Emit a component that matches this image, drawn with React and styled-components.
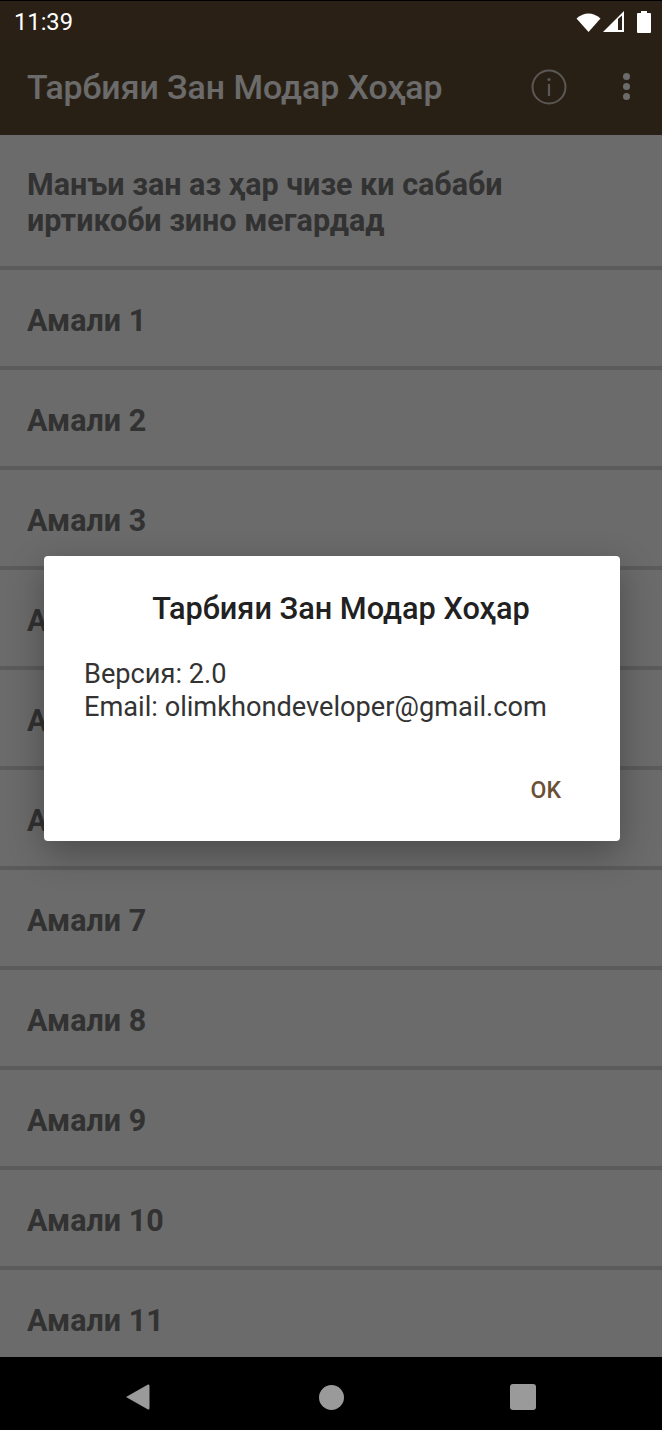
import styled, { createGlobalStyle } from 'styled-components'

const rows = ['Амали 1', 'Амали 2', 'Амали 3', 'Амали 4', 'Амали 5', 'Амали 6', 'Амали 7', 'Амали 8', 'Амали 9', 'Амали 10', 'Амали 11']

export default function App() {
  return (
    <Screen>
      <GlobalStyle />
      <StatusBar>
        <Clock>11:39</Clock>
        <StatusIcons>
          <svg width='25' height='20' viewBox='0 0 25 20'>
            <path d='M0.5 6.5 Q12.5 -3.5 24.5 6.5 L12.5 20 Z' fill='#fff' />
          </svg>
          <SignalIcon width='22' height='21' viewBox='0 0 22 21'>
            <path d='M21 0 V21 H0 Z' fill='#fff' />
            <path d='M15 8 L19 4.5 V19 H15 Z' fill='#2a2015' />
          </SignalIcon>
          <svg width='14' height='22' viewBox='0 0 14 22'>
            <path d='M4 0 H10 V2 H13 Q14 2 14 3 V21 Q14 22 13 22 H1 Q0 22 0 21 V3 Q0 2 1 2 H4 Z' fill='#fff' />
          </svg>
        </StatusIcons>
      </StatusBar>
      <Body>
        <AppBar>
          <AppTitle>Тарбияи Зан Модар Хоҳар</AppTitle>
          <InfoIcon width='36' height='36' viewBox='0 0 36 36'>
            <circle cx='18' cy='18' r='16.5' fill='none' stroke='#fff' strokeOpacity='0.75' strokeWidth='2' />
            <circle cx='18' cy='10.5' r='1.6' fill='#fff' fillOpacity='0.75' />
            <path d='M18 15 V27' stroke='#fff' strokeOpacity='0.75' strokeWidth='2.2' fill='none' />
          </InfoIcon>
          <MenuDots>
            <i />
            <i />
            <i />
          </MenuDots>
        </AppBar>
        <List>
          <Row $first>Манъи зан аз ҳар чизе ки сабаби иртикоби зино мегардад</Row>
          {rows.map(r => (
            <Row key={r}>{r}</Row>
          ))}
        </List>
        <Scrim>
          <Dialog>
            <DialogTitle>Тарбияи Зан Модар Хоҳар</DialogTitle>
            <DialogText>
              Версия: 2.0
              <br />
              Email: olimkhondeveloper@gmail.com
            </DialogText>
            <DialogActions>
              <OkButton>OK</OkButton>
            </DialogActions>
          </Dialog>
        </Scrim>
      </Body>
      <NavBar>
        <BackIcon width='26' height='28' viewBox='0 0 26 28'>
          <path d='M1 14 L23 1.5 Q24.5 1 24.5 3 V25 Q24.5 27 23 26.5 Z' fill='#9a9a9a' />
        </BackIcon>
        <HomeDot />
        <RecentSquare />
      </NavBar>
    </Screen>
  )
}

const GlobalStyle = createGlobalStyle`
  html, body {
    margin: 0;
    padding: 0;
    background: #000;
  }
  * {
    box-sizing: border-box;
  }
`

const Screen = styled.div`
  width: 662px;
  height: 1430px;
  display: flex;
  flex-direction: column;
  overflow: hidden;
  font-family: Roboto, 'Noto Sans', sans-serif;
`

const StatusBar = styled.div`
  height: 40px;
  flex: none;
  display: flex;
  align-items: center;
  justify-content: space-between;
  padding: 2px 11px 0 14px;
  background: #2a2015;
  border-top: 1px solid #000;
`

const Clock = styled.span`
  color: #fff;
  font-size: 23.7px;
`

const StatusIcons = styled.div`
  display: flex;
  align-items: center;
  gap: 2px;
`

const SignalIcon = styled.svg`
  margin-right: 10px;
`

const Body = styled.div`
  position: relative;
  flex: 1;
  min-height: 0;
  display: flex;
  flex-direction: column;
  overflow: hidden;
`

const AppBar = styled.div`
  height: 95px;
  flex: none;
  display: flex;
  align-items: center;
  padding: 0 32px 0 27px;
  background: #624c32;
`

const AppTitle = styled.div`
  flex: 1;
  color: #fff;
  font-size: 33.8px;
  font-weight: 500;
  line-height: 1;
`

const InfoIcon = styled.svg`
  margin-right: 56px;
  margin-top: -2px;
`

const MenuDots = styled.div`
  display: flex;
  flex-direction: column;
  gap: 3px;
  margin-top: -2px;
  i {
    display: block;
    width: 7px;
    height: 7px;
    border-radius: 50%;
    background: #fff;
  }
`

const List = styled.div`
  flex: 1;
  background: #fff;
`

const Row = styled.div`
  height: ${props => (props.$first ? 135 : 100)}px;
  display: flex;
  align-items: center;
  padding: ${props => (props.$first ? 4 : 6)}px 150px 0 27px;
  border-bottom: 4px solid #d9d9d9;
  color: #777;
  font-size: 30.5px;
  font-weight: 700;
  line-height: 36px;
`

const Scrim = styled.div`
  position: absolute;
  inset: 0;
  display: flex;
  align-items: center;
  justify-content: center;
  background: rgba(0, 0, 0, 0.58);
`

const Dialog = styled.div`
  width: 576px;
  height: 285px;
  margin-left: 2px;
  display: flex;
  flex-direction: column;
  padding: 34px 41px 0 40px;
  background: #fff;
  border-radius: 4px;
  box-shadow: 0 12px 36px rgba(0, 0, 0, 0.3);
`

const DialogTitle = styled.div`
  padding-left: 19px;
  color: #212121;
  font-size: 30.7px;
  line-height: 38px;
  font-weight: 500;
  text-align: center;
`

const DialogText = styled.div`
  margin-top: 30px;
  color: #333;
  font-size: 27.2px;
  line-height: 33px;
`

const DialogActions = styled.div`
  margin-top: 53px;
  display: flex;
  justify-content: flex-end;
  padding-right: 18px;
`

const OkButton = styled.span`
  color: #6a5035;
  font-size: 23px;
  font-weight: 500;
`

const NavBar = styled.div`
  height: 73px;
  flex: none;
  display: flex;
  align-items: center;
  justify-content: center;
  gap: 166px;
  padding-top: 7px;
  padding-left: 1px;
  background: #000;
`

const BackIcon = styled.svg`
  margin-left: -2px;
  margin-right: 2px;
`

const HomeDot = styled.div`
  width: 25px;
  height: 25px;
  border-radius: 50%;
  background: #9a9a9a;
`

const RecentSquare = styled.div`
  width: 26px;
  height: 26px;
  border-radius: 3px;
  background: #9a9a9a;
`
